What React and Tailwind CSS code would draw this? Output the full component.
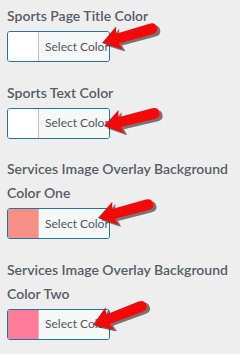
import React from 'react';

const fields = [
  { label: 'Sports Page Title Color', swatch: 'bg-white', arrow: 'left-[90px] top-[-15px] rotate-[-16deg]' },
  { label: 'Sports Text Color', swatch: 'bg-white', arrow: 'left-[92px] top-[-9px] rotate-[-14deg]' },
  { label: 'Services Image Overlay Background Color One', swatch: 'bg-[#f79084]', arrow: 'left-[86px] top-[-17px] rotate-[-15deg]' },
  { label: 'Services Image Overlay Background Color Two', swatch: 'bg-[#ff7c98]', arrow: 'left-[81px] top-[-11px] rotate-[-21deg]' },
];

const arrowPath = 'M0,0 L18,-12 L16,-5 L51,-5.5 Q57,-5.5 57,0 Q57,5.5 51,5.5 L16,5 L18,12 Z';

function Arrow({ className }) {
  // tip sits at (4,26) inside the svg, rotation pivots on the tip
  return (
    <svg
      width="70"
      height="40"
      viewBox="0 0 70 40"
      className={`absolute origin-[4px_26px] pointer-events-none ${className}`}
    >
      <g transform="translate(6.5,29)">
        <path d={arrowPath} fill="#333" opacity="0.65" />
      </g>
      <g transform="translate(4,26)">
        <path d={arrowPath} fill="#f20a0a" />
      </g>
    </svg>
  );
}

export default function App() {
  return (
    <div className="w-[240px] h-[354px] bg-[#eeeeee] pl-[7px] pt-[4px] font-['Lato',sans-serif] overflow-hidden">
      {fields.map((f) => (
        <div key={f.label} className="mb-[18.5px]">
          <div className="text-[14px] leading-[24px] font-semibold text-[#555d66] pr-1">{f.label}</div>
          <div className="relative mt-[3px] w-[103px] h-[31px] flex rounded-[3px] border border-[#2271b1] overflow-visible">
            <span className={`w-[31px] h-full rounded-l-[2px] border-r border-[#c3c4c7] ${f.swatch}`} />
            <span className="flex-1 rounded-r-[2px] bg-[#f6f7f7] flex items-center pl-[6px] text-[12px] text-[#50575e]">
              Select Color
            </span>
            <Arrow className={f.arrow} />
          </div>
        </div>
      ))}
    </div>
  );
}
